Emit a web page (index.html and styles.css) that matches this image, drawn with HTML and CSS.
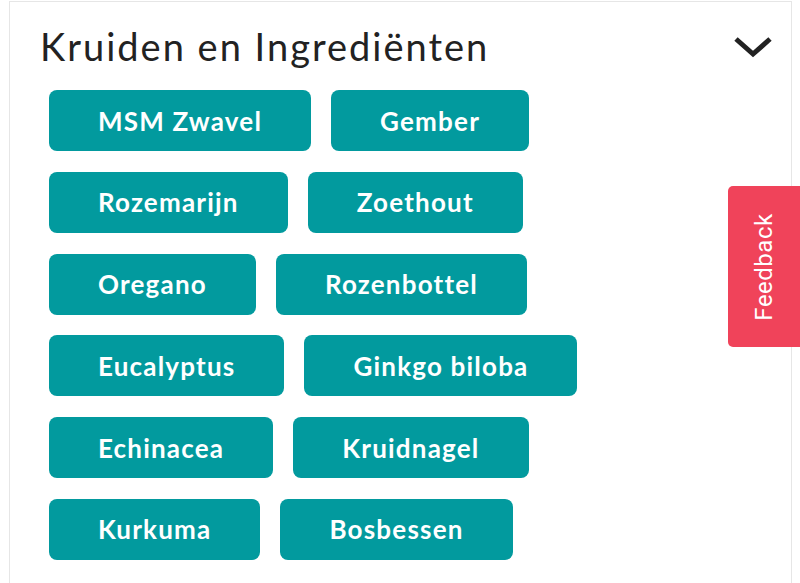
FILE: index.html
```html
<!DOCTYPE html>
<html lang="nl">
<head>
<meta charset="utf-8">
<link rel="stylesheet" href="styles.css">
</head>
<body>
<div class="card">
  <div class="header">
    <h2 class="title">Kruiden en Ingrediënten</h2>
    <svg class="chevron" width="40" height="24" viewBox="0 0 40 24"><path d="M3 4 L20 19 L37 4" fill="none" stroke="#222" stroke-width="5"/></svg>
  </div>
  <div class="tags">
    <div class="row"><span class="tag">MSM Zwavel</span><span class="tag">Gember</span></div>
    <div class="row"><span class="tag">Rozemarijn</span><span class="tag">Zoethout</span></div>
    <div class="row"><span class="tag">Oregano</span><span class="tag">Rozenbottel</span></div>
    <div class="row"><span class="tag">Eucalyptus</span><span class="tag">Ginkgo biloba</span></div>
    <div class="row"><span class="tag">Echinacea</span><span class="tag">Kruidnagel</span></div>
    <div class="row"><span class="tag">Kurkuma</span><span class="tag">Bosbessen</span></div>
  </div>
</div>
<div class="feedback"><span>Feedback</span></div>
</body>
</html>
```
FILE: styles.css
```css
html, body { margin: 0; padding: 0; background: #fff; }
body { width: 800px; height: 583px; overflow: hidden; position: relative; font-family: "Lato", "Open Sans", sans-serif; }
.card {
  margin: 1px 8px 0 9px;
  border: 1px solid #e6e6e6;
  border-bottom: none;
  height: 600px;
  padding: 0 0 0 30px;
}
.header { display: flex; align-items: center; justify-content: space-between; height: 88px; padding-right: 18px; }
.title { margin: 0; font-size: 38px; font-weight: 400; color: #222; letter-spacing: 2px; }
.chevron { display: block; margin-top: 2px; }
.tags { display: flex; flex-direction: column; gap: 20.8px; padding-left: 9px; }
.row { display: flex; gap: 20px; }
.tag {
  display: flex; align-items: center; justify-content: center;
  height: 61px; box-sizing: border-box;
  padding: 0 49px;
  background: #029a9e; color: #fff;
  border-radius: 8px;
  font-size: 26px; font-weight: 700; letter-spacing: 1.2px;
}
.feedback {
  position: absolute; right: 0; top: 186px;
  width: 72px; height: 161px;
  background: #f0435a; border-radius: 5px 0 0 5px;
  display: flex; align-items: center; justify-content: center;
}
.feedback span {
  transform: rotate(-90deg); white-space: nowrap;
  color: #fff; font-family: "Roboto", "Liberation Sans", sans-serif; font-size: 24px; letter-spacing: 0.5px;
}
```
